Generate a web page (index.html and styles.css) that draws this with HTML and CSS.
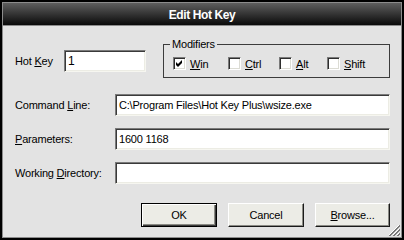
FILE: index.html
```html
<!DOCTYPE html>
<html>
<head>
<meta charset="utf-8">
<title>Edit Hot Key</title>
<link rel="stylesheet" href="styles.css">
</head>
<body>
<div class="window">
  <div class="frame">
    <div class="titlebar">Edit Hot Key</div>
    <div class="content">
      <div class="top-row">
        <div class="hotkey">
          <span class="hot-label">Hot <u>K</u>ey</span>
          <div class="field hot-field">1</div>
        </div>
        <fieldset class="group">
          <legend>Modifiers</legend>
          <div class="checks">
            <div class="check check-win">
              <span class="box"><svg class="tick" width="7" height="7" viewBox="0 0 7 7"><path d="M0 2 L2 4 L6 0 L6 3 L2 7 L0 5 Z" fill="#000"/></svg></span>
              <span><u>W</u>in</span>
            </div>
            <div class="check check-ctrl">
              <span class="box"></span>
              <span><u>C</u>trl</span>
            </div>
            <div class="check check-alt">
              <span class="box"></span>
              <span><u>A</u>lt</span>
            </div>
            <div class="check">
              <span class="box"></span>
              <span><u>S</u>hift</span>
            </div>
          </div>
        </fieldset>
      </div>
      <div class="form-row first">
        <span class="row-label">Command <u>L</u>ine:</span>
        <div class="field wide">C:\Program Files\Hot Key Plus\wsize.exe</div>
      </div>
      <div class="form-row">
        <span class="row-label"><u>P</u>arameters:</span>
        <div class="field wide">1600 1168</div>
      </div>
      <div class="form-row">
        <span class="row-label">Working <u>D</u>irectory:</span>
        <div class="field wide"></div>
      </div>
      <div class="buttons">
        <div class="btn default"><span>OK</span></div>
        <div class="btn"><span>Cancel</span></div>
        <div class="btn narrow"><span><u>B</u>rowse...</span></div>
      </div>
    </div>
    <svg class="grip" width="12" height="12" viewBox="0 0 12 12">
      <path d="M11 1 L1 11 M11 5 L5 11 M11 9 L9 11" stroke="#fff" stroke-width="1"/>
      <path d="M12 1 L1 12 M12 2 L2 12 M12 5 L5 12 M12 6 L6 12 M12 9 L9 12 M12 10 L10 12" stroke="#7a7a7a" stroke-width="1"/>
    </svg>
  </div>
</div>
</body>
</html>
```

FILE: styles.css
```css
* { box-sizing: border-box; }
html, body { margin: 0; padding: 0; }
body {
  width: 404px;
  height: 240px;
  overflow: hidden;
  font-family: "Liberation Sans", Arial, sans-serif;
  font-size: 11px;
  letter-spacing: -0.2px;
  color: #000;
  background: #000;
}
.window {
  width: 404px;
  height: 240px;
  border: 2px solid #000;
}
.frame {
  position: relative;
  height: 100%;
  border: 1px solid #8c8c8c;
  background: #e3e3e3;
  display: flex;
  flex-direction: column;
}
.titlebar {
  height: 23px;
  border-bottom: 1px solid #8c8c8c;
  background: linear-gradient(#5e5e5e, #0a0a0a);
  color: #fff;
  font-weight: bold;
  font-size: 12px;
  letter-spacing: -0.4px;
  display: flex;
  align-items: center;
  justify-content: center;
  padding-top: 1px;
}
.content {
  padding: 12px 11px 0 12px;
  display: flex;
  flex-direction: column;
}
.top-row {
  display: flex;
  justify-content: space-between;
  align-items: flex-start;
}
.hotkey {
  display: flex;
  align-items: center;
  margin-top: 12px;
}
.hot-label { width: 49px; }
.field {
  height: 22px;
  background: #fff;
  border: 1px solid;
  border-color: #7a7a7a #f6f6f0 #f6f6f0 #7a7a7a;
  box-shadow: inset 1px 1px 0 #3a3a3a, inset -1px -1px 0 #ecece4;
  padding: 0 3px;
  display: flex;
  align-items: center;
  white-space: nowrap;
}
.hot-field { width: 82px; font-size: 12px; }
.group {
  margin: 0;
  width: 227px;
  border: 1px solid #3c3c3c;
  padding: 6px 0 7px 9px;
}
.group legend {
  padding: 0 2px;
  margin-left: -3px;
  line-height: 13px;
}
.checks {
  display: flex;
  align-items: center;
}
.check {
  display: flex;
  align-items: center;
  gap: 4px;
}
.check-win { width: 55px; }
.check-ctrl { width: 51px; }
.check-alt { width: 48px; }
.box {
  width: 13px;
  height: 13px;
  background: #fff;
  border: 1px solid;
  border-color: #7a7a7a #fff #fff #7a7a7a;
  box-shadow: inset 1px 1px 0 #2e2e2e, inset -1px -1px 0 #dcdcd4;
  display: flex;
  align-items: center;
  justify-content: center;
}
.tick { display: block; }
.form-row {
  display: flex;
  align-items: center;
  margin-top: 12px;
}
.form-row.first { margin-top: 16px; }
.row-label { width: 100px; }
.wide { flex: 1; }
.buttons {
  display: flex;
  justify-content: flex-end;
  gap: 11px;
  margin-top: 19px;
}
.btn {
  width: 76px;
  height: 24px;
  background: #ecece6;
  border: 1px solid;
  border-color: #fff #1a1a1a #1a1a1a #fff;
  box-shadow: inset -1px -1px 0 #8a8a84;
  display: flex;
  align-items: center;
  justify-content: center;
}
.btn.narrow { width: 75px; }
.btn.default {
  border: 1px solid #000;
  box-shadow: inset 1px 1px 0 #fff, inset -1px -1px 0 #3a3a3a, inset -2px -2px 0 #8a8a84;
}
.grip {
  position: absolute;
  right: 1px;
  bottom: 1px;
}
```
